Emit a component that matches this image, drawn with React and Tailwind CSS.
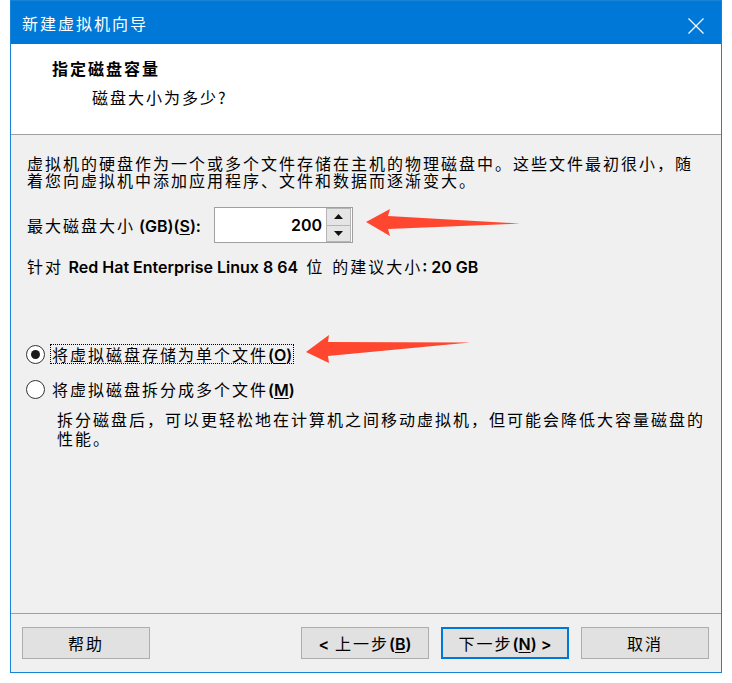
import React from 'react';

// Fonts: CJK text is spaced wide like the old bitmap UI font, latin runs are a touch heavier
const cjk = "font-['Noto_Sans_CJK_SC',sans-serif] text-[16px] tracking-[2px] text-black";
const latin = "font-['Inter','DejaVu_Sans','Noto_Sans_CJK_SC',sans-serif] font-semibold text-[16px] tracking-normal";

const Latin = ({ children }) => <span className={latin}>{children}</span>;

const Key = ({ children }) => <span className="underline underline-offset-2">{children}</span>;

const Gap = () => <span className="inline-block w-[8px]" />;

const Radio = ({ checked, focused, children }) => (
    <div className="flex items-center h-[20px] pl-[15px]">
        <div className="w-[19px] h-[19px] rounded-full border border-[#333333] bg-white flex items-center justify-center shrink-0">
            {checked && <div className="w-[9px] h-[9px] rounded-full bg-[#1a1a1a]" />}
        </div>
        <div
            className={`ml-[5px] h-[20px] flex items-center pl-[1px] pr-[1px] border border-dotted ${
                focused ? 'border-black' : 'border-transparent'
            }`}
        >
            <span className={`${cjk} leading-[18px]`}>{children}</span>
        </div>
    </div>
);

const Button = ({ children, primary }) => (
    <button
        className={`w-[128px] h-[32px] flex items-center justify-center bg-[#e1e1e1] ${
            primary ? 'border-2 border-[#0078d7]' : 'border border-[#adadad]'
        }`}
    >
        <span className={`${cjk} leading-[18px]`}>{children}</span>
    </button>
);

// Red pointer arrows drawn on top of the dialog
const Arrows = () => (
    <svg className="absolute inset-0 pointer-events-none" width="732" height="683" viewBox="0 0 732 683">
        <polygon points="366,222 390,209 388,216 520,223.5 388,229 390,236" fill="#ff462e" />
        <polygon points="306,352 329,335 328,342 470,342.5 328,356 329,363" fill="#ff462e" />
    </svg>
);

export default function App() {
    return (
        <div className="relative w-[732px] h-[683px] bg-white px-[10px] pb-[10px]">
            <div className="w-[712px] h-[673px] border border-[#1883d7] flex flex-col bg-[#f0f0f0]">
                {/* Title bar */}
                <div className="h-[43px] shrink-0 bg-[#0078d7] flex items-center justify-between pl-[11px] pr-[16px]">
                    <span className="font-['Noto_Sans_CJK_SC',sans-serif] text-[16px] tracking-[2px] text-white leading-[20px] mt-[1px]">
                        新建虚拟机向导
                    </span>
                    <svg width="16" height="16" viewBox="0 0 16 16" className="mt-[6px] mr-[1px]">
                        <path d="M0.5 0.5 L15.5 15.5 M15.5 0.5 L0.5 15.5" stroke="white" strokeWidth="1.2" />
                    </svg>
                </div>

                {/* Header */}
                <div className="h-[91px] shrink-0 bg-white border-b border-[#a0a0a0] flex flex-col">
                    <div className={`${cjk} font-bold leading-[20px] pl-[41px] mt-[14px]`}>指定磁盘容量</div>
                    <div className={`${cjk} leading-[20px] pl-[81px] mt-[9px]`}>磁盘大小为多少?</div>
                </div>

                {/* Body */}
                <div className="flex-1 flex flex-col px-[16px] pt-[20px]">
                    <p className={`${cjk} leading-[17px]`}>
                        虚拟机的硬盘作为一个或多个文件存储在主机的物理磁盘中。这些文件最初很小，随
                        <br />
                        着您向虚拟机中添加应用程序、文件和数据而逐渐变大。
                    </p>

                    <div className="flex items-center mt-[18px] h-[36px]">
                        <div className="w-[187px] shrink-0">
                            <span className={cjk}>最大磁盘大小</span>
                            <Latin>
                                {' '}(GB)(<Key>S</Key>):
                            </Latin>
                        </div>
                        <div className="w-[139px] h-[36px] border border-[#a0a0a0] bg-white flex items-center">
                            <div className="flex-1 text-right pr-[4px]">
                                <span className={latin}>200</span>
                            </div>
                            <div className="w-[25px] h-[34px] flex flex-col mr-[1px]">
                                <div className="flex-1 bg-[#e5e5e5] border border-[#b5b5b5] flex items-center justify-center">
                                    <svg width="9" height="5" viewBox="0 0 9 5">
                                        <polygon points="4.5,0 9,5 0,5" fill="#111" />
                                    </svg>
                                </div>
                                <div className="flex-1 bg-[#e5e5e5] border border-t-0 border-[#b5b5b5] flex items-center justify-center">
                                    <svg width="9" height="5" viewBox="0 0 9 5">
                                        <polygon points="0,0 9,0 4.5,5" fill="#111" />
                                    </svg>
                                </div>
                            </div>
                        </div>
                    </div>

                    <div className="mt-[13px] leading-[20px]">
                        <span className={cjk}>针对 </span>
                        <Latin>Red Hat Enterprise Linux 8 64</Latin>
                        <Gap />
                        <span className={cjk}>位</span>
                        <Gap />
                        <span className={cjk}>的建议大小</span>
                        <Latin>: 20 GB</Latin>
                    </div>

                    <div className="mt-[67px] -ml-[16px]">
                        <Radio checked focused>
                            将虚拟磁盘存储为单个文件<Latin>(<Key>O</Key>)</Latin>
                        </Radio>
                    </div>
                    <div className="mt-[15px] -ml-[16px]">
                        <Radio>
                            将虚拟磁盘拆分成多个文件<Latin>(<Key>M</Key>)</Latin>
                        </Radio>
                    </div>

                    <p className={`${cjk} leading-[19px] mt-[11px] pl-[30px]`}>
                        拆分磁盘后，可以更轻松地在计算机之间移动虚拟机，但可能会降低大容量磁盘的
                        <br />
                        性能。
                    </p>
                </div>

                {/* Footer buttons */}
                <div className="h-[59px] shrink-0 border-t border-[#a0a0a0] flex items-start pt-[13px] pl-[11px] pr-[12px]">
                    <Button>帮助</Button>
                    <div className="flex-1" />
                    <div className="flex gap-[12px]">
                        <Button>
                            <Latin>&lt;</Latin> 上一步<Latin>(<Key>B</Key>)</Latin>
                        </Button>
                        <Button primary>
                            下一步<Latin>(<Key>N</Key>) &gt;</Latin>
                        </Button>
                        <Button>取消</Button>
                    </div>
                </div>
            </div>
            <Arrows />
        </div>
    );
}
